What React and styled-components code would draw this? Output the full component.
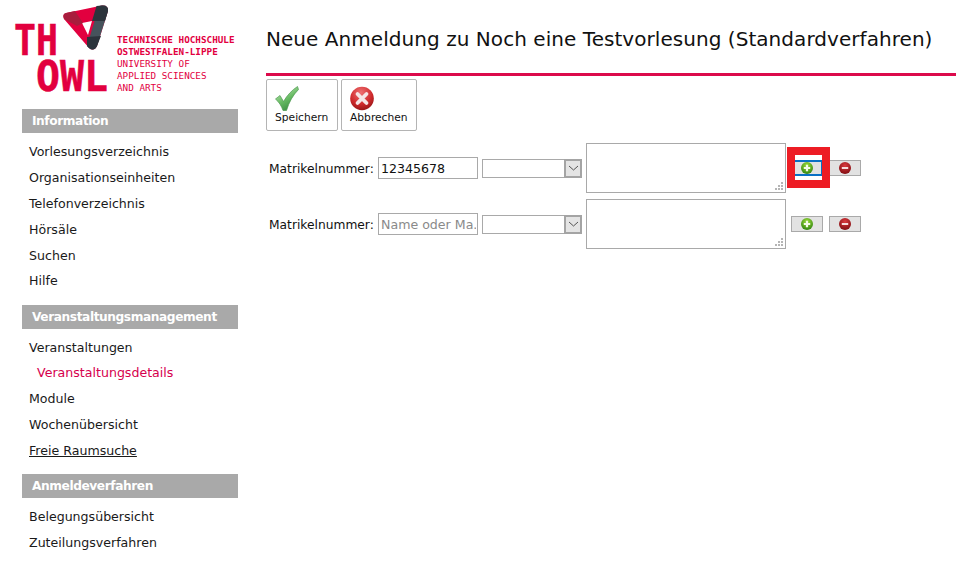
import React from "react";
import styled, { createGlobalStyle } from "styled-components";

const Global = createGlobalStyle`
  html, body { margin: 0; padding: 0; background: #fff; height: 574px; overflow: hidden; }
  body { font-family: "DejaVu Sans", Verdana, sans-serif; font-size: 12.6px; color: #111; }
`;

const Page = styled.div`
  display: flex;
  width: 956px;
  height: 574px;
  overflow: hidden;
`;
const Sidebar = styled.aside`
  width: 266px;
  flex: none;
`;
const LogoRow = styled.div`
  display: flex;
  height: 109px;
  padding-left: 15px;
  box-sizing: border-box;
`;
const LogoSvg = styled.svg`
  overflow: visible;
  flex: none;
`;
const LogoText = styled.div`
  margin-left: 7px;
  padding-top: 34px;
  display: flex;
  flex-direction: column;
`;
const LogoLine = styled.span`
  font-family: "DejaVu Sans Mono", monospace;
  font-size: 9.3px;
  line-height: 12px;
  color: #e2003f;
  white-space: nowrap;
  font-weight: ${(p) => (p.$bold ? 700 : 400)};
`;
const MenuHead = styled.div`
  margin-left: 22px;
  width: 216px;
  height: 24px;
  line-height: 24px;
  padding-left: 10px;
  box-sizing: border-box;
  background: #a9a9a9;
  color: #fff;
  font-weight: 700;
  font-size: 12.2px;
  letter-spacing: -0.42px;
`;
const MenuList = styled.ul`
  list-style: none;
  margin: 6px 0 10.25px 29px;
  padding: 0;
`;
const MenuItem = styled.li`
  height: 25.9px;
  line-height: 25.9px;
  white-space: nowrap;
  color: ${(p) => (p.$active ? "#d6004d" : "#1a1a1a")};
  padding-left: ${(p) => (p.$active ? "8px" : "0")};
  text-decoration: ${(p) => (p.$link ? "underline" : "none")};
`;
const Main = styled.main`
  flex: 1;
  min-width: 0;
`;
const Title = styled.h1`
  margin: 0;
  height: 76px;
  box-sizing: border-box;
  border-bottom: 3px solid #dc0a4b;
  padding: 26px 0 0 0;
  font-size: 20px;
  letter-spacing: 0.05px;
  line-height: 26px;
  font-weight: 400;
  color: #111;
  white-space: nowrap;
`;
const Toolbar = styled.div`
  display: flex;
  gap: 3px;
  margin-top: 3px;
`;
const ToolButton = styled.button`
  width: ${(p) => p.$w}px;
  height: 52px;
  box-sizing: border-box;
  background: #fff;
  border: 1px solid #b4b4b4;
  border-radius: 2px;
  padding: 6px 0 0 8px;
  display: flex;
  flex-direction: column;
  align-items: flex-start;
  font-family: inherit;
  font-size: 10.7px;
  color: #111;
  line-height: 14px;
  svg { display: block; margin-bottom: 0; }
`;
const Rows = styled.div`
  margin-top: 12px;
  display: flex;
  flex-direction: column;
  gap: 6px;
`;
const Row = styled.div`
  display: flex;
  align-items: center;
  height: 50px;
  padding-left: 3px;
`;
const Label = styled.label`
  width: 109px;
  flex: none;
  white-space: nowrap;
  font-size: 12.25px;
  padding-top: 2px;
`;
const TextInput = styled.input`
  width: 100px;
  height: 22px;
  box-sizing: border-box;
  border: 1px solid #a9a9a9;
  padding: 0 1px 0 2px;
  margin: 0 4px 0 0;
  font-family: inherit;
  font-size: 12.6px;
  color: #111;
  outline: none;
  &::placeholder { color: #8a8a8a; opacity: 1; }
`;
const SelectWrap = styled.div`
  display: flex;
  width: 100px;
  height: 19px;
  margin-right: 4px;
  box-sizing: border-box;
`;
const NativeSelect = styled.select`
  appearance: none;
  flex: 1;
  min-width: 0;
  border: 1px solid #a9a9a9;
  border-right: none;
  background: #fff;
  margin: 0;
`;
const SelectArrow = styled.div`
  width: 18px;
  flex: none;
  box-sizing: border-box;
  background: #e4e4e4;
  border: 2px solid #a4a4a4;
  display: flex;
  align-items: center;
  justify-content: center;
`;
const NoteWrap = styled.div`
  position: relative;
  width: 200px;
  height: 50px;
  flex: none;
`;
const Note = styled.textarea`
  display: block;
  width: 100%;
  height: 100%;
  box-sizing: border-box;
  border: 1px solid #a9a9a9;
  margin: 0;
  padding: 2px;
  outline: none;
  font-family: inherit;
  resize: none;
`;
const Grip = styled.svg`
  position: absolute;
  right: 3px;
  bottom: 3px;
  pointer-events: none;
`;
const Actions = styled.div`
  position: relative;
  display: flex;
  align-items: center;
  gap: 6px;
  margin-left: 5px;
`;
const IconButton = styled.button`
  width: 32px;
  height: 16px;
  box-sizing: border-box;
  background: #e2e2e2;
  border: 1px solid #a9a9a9;
  padding: 0;
  display: flex;
  align-items: center;
  justify-content: center;
  svg { display: block; }
`;
const Highlight = styled.div`
  position: absolute;
  left: -4px;
  top: -13px;
  width: 43px;
  height: 41px;
  box-sizing: border-box;
  border: 8px solid #ed1c24;
  background: #fff;
  display: flex;
  align-items: center;
`;
const Selected = styled.div`
  width: 27px;
  height: 16px;
  padding-right: 3px;
  box-sizing: border-box;
  background: #e2e2e2;
  border-top: 2px solid #0a70c4;
  border-bottom: 2px solid #0a70c4;
  border-right: 1px solid #0a70c4;
  display: flex;
  align-items: center;
  justify-content: center;
  svg { display: block; }
`;

const Chevron = () => (
  <svg width="11" height="6" viewBox="0 0 11 6" fill="none">
    <path d="M1 1l4.500 4 4.500-4" stroke="#555" strokeWidth="1" />
  </svg>
);
const Plus = () => (
  <svg width="12" height="12" viewBox="0 0 12 12">
    <circle cx="6" cy="6" r="6" fill="url(#pg)" />
    <path d="M6 2.800v6.400M2.800 6h6.400" stroke="#f4fae8" strokeWidth="2.200" />
  </svg>
);
const Minus = () => (
  <svg width="12" height="12" viewBox="0 0 12 12">
    <circle cx="6" cy="6" r="6" fill="url(#mg)" />
    <path d="M2.800 6h6.400" stroke="#f6dcdc" strokeWidth="2" />
  </svg>
);
const Gradients = () => (
  <svg width="0" height="0" style={{ position: "absolute" }}>
    <defs>
      <radialGradient id="pg" cx="50%" cy="30%" r="75%">
        <stop offset="0" stopColor="#9ddc3c" />
        <stop offset="1" stopColor="#2a7f0c" />
      </radialGradient>
      <radialGradient id="mg" cx="50%" cy="30%" r="75%">
        <stop offset="0" stopColor="#d93a3e" />
        <stop offset="1" stopColor="#7c0a0e" />
      </radialGradient>
    </defs>
  </svg>
);
const Check = () => (
  <svg width="24" height="25" viewBox="0 0 24 25">
    <defs>
      <linearGradient id="cg" x1="0.2" y1="0.1" x2="0.7" y2="1">
        <stop offset="0" stopColor="#b8e4ae" />
        <stop offset="0.5" stopColor="#66ba62" />
        <stop offset="1" stopColor="#35893f" />
      </linearGradient>
    </defs>
    <path d="M.5 13 5 9.500l3.500 6C12 9.500 17 4 22.500.5L23.500 3.500C18 9 14 16 11.500 24.500H8C6.500 20 4 16 .5 13Z" fill="url(#cg)" stroke="#4d9a50" strokeWidth=".7" />
  </svg>
);
const Cancel = () => (
  <svg width="24" height="25" viewBox="0 0 24 25">
    <defs>
      <radialGradient id="xg" cx="45%" cy="25%" r="80%">
        <stop offset="0" stopColor="#ee7072" />
        <stop offset=".6" stopColor="#cf2a2c" />
        <stop offset="1" stopColor="#8f1214" />
      </radialGradient>
    </defs>
    <circle cx="12" cy="12.500" r="11.800" fill="url(#xg)" />
    <path d="M7.500 8l9 9M16.500 8l-9 9" stroke="#f5e6e6" strokeWidth="3.800" strokeLinecap="round" />
  </svg>
);
const LogoMark = () => (
  <LogoSvg width="95" height="100" viewBox="15 0 95 100">
    <path d="M66 13 102 5.500Q108.500 5 108 11L97 46Q94 52 89 48L64 19Q62 14 66 13ZM82 23 88 35 92 21Z" fill="#e2003f" fillRule="evenodd" />
    <path d="M66 13 75 11 83 23 77 26 64 19Q62 14 66 13Z" fill="#a81d3d" />
    <path d="M99 6 102 5.500Q108.500 5 108 11L97 46Q94 52 89 48L87 46Z" fill="#46535c" />
    <path d="M96.500 6 102 5.500Q108.500 5 108 11L105 21 92 21Z" fill="#2c343c" />
    <path d="M87 37 101 36 97 46Q94 52 89 48L87 46Z" fill="#2c343c" />
    <g fill="#e2003f" stroke="#e2003f" strokeWidth=".5" fontFamily="'DejaVu Sans Mono', monospace" fontWeight="700" fontSize="42.500">
      <text x="14" y="55" textLength="44" lengthAdjust="spacingAndGlyphs">TH</text>
      <text x="36" y="91" textLength="72" lengthAdjust="spacingAndGlyphs">OWL</text>
    </g>
  </LogoSvg>
);

const Matrikel = ({ id, value, placeholder, highlight }) => (
  <Row>
    <Label htmlFor={id}>Matrikelnummer:</Label>
    <TextInput id={id} defaultValue={value} placeholder={placeholder} />
    <SelectWrap>
      <NativeSelect aria-label="Auswahl" />
      <SelectArrow><Chevron /></SelectArrow>
    </SelectWrap>
    <NoteWrap>
      <Note />
      <Grip width="8" height="8" viewBox="0 0 8 8" fill="#b5b5b5">
        <rect x="6" y="0" width="2" height="2" />
        <rect x="3" y="3" width="2" height="2" />
        <rect x="6" y="3" width="2" height="2" />
        <rect x="0" y="6" width="2" height="2" />
        <rect x="3" y="6" width="2" height="2" />
        <rect x="6" y="6" width="2" height="2" />
      </Grip>
    </NoteWrap>
    <Actions>
      <IconButton><Plus /></IconButton>
      <IconButton><Minus /></IconButton>
      {highlight && (
        <Highlight><Selected><Plus /></Selected></Highlight>
      )}
    </Actions>
  </Row>
);

const menus = [
  ["Information", [["Vorlesungsverzeichnis"], ["Organisationseinheiten"], ["Telefonverzeichnis"], ["Hörsäle"], ["Suchen"], ["Hilfe"]]],
  ["Veranstaltungsmanagement", [["Veranstaltungen"], ["Veranstaltungsdetails", "active"], ["Module"], ["Wochenübersicht"], ["Freie Raumsuche", "link"]]],
  ["Anmeldeverfahren", [["Belegungsübersicht"], ["Zuteilungsverfahren"]]],
];

export default function App() {
  return (
    <Page>
      <Global />
      <Gradients />
      <Sidebar>
        <LogoRow>
          <LogoMark />
          <LogoText>
            <LogoLine $bold>TECHNISCHE HOCHSCHULE</LogoLine>
            <LogoLine $bold>OSTWESTFALEN-LIPPE</LogoLine>
            <LogoLine>UNIVERSITY OF</LogoLine>
            <LogoLine>APPLIED SCIENCES</LogoLine>
            <LogoLine>AND ARTS</LogoLine>
          </LogoText>
        </LogoRow>
        {menus.map(([head, items]) => (
          <React.Fragment key={head}>
            <MenuHead>{head}</MenuHead>
            <MenuList>
              {items.map(([t, kind]) => (
                <MenuItem key={t} $active={kind === "active"} $link={kind === "link"}>{t}</MenuItem>
              ))}
            </MenuList>
          </React.Fragment>
        ))}
      </Sidebar>
      <Main>
        <Title>Neue Anmeldung zu Noch eine Testvorlesung (Standardverfahren)</Title>
        <Toolbar>
          <ToolButton $w={72}><Check />Speichern</ToolButton>
          <ToolButton $w={76}><Cancel />Abbrechen</ToolButton>
        </Toolbar>
        <Rows>
          <Matrikel id="m1" value="12345678" highlight />
          <Matrikel id="m2" placeholder="Name oder Ma." />
        </Rows>
      </Main>
    </Page>
  );
}
